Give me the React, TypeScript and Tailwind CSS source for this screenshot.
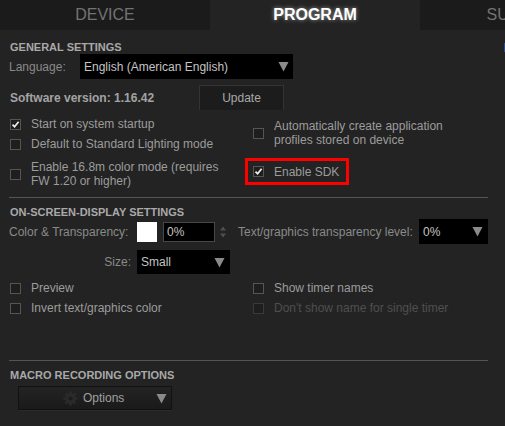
import React from "react";

const Tri = ({ className = "" }: { className?: string }) => (
  <svg width="11" height="11" viewBox="0 0 11 11" className={`shrink-0 ${className}`}>
    <polygon points="0.5,1 10.5,1 5.5,10.5" fill="#8a8a8a" />
  </svg>
);

const Check = ({ checked = false, disabled = false }: { checked?: boolean; disabled?: boolean }) => (
  <div
    className={`w-[11px] h-[11px] shrink-0 border ${disabled ? "border-[#3a3a3a]" : "border-[#555]"} bg-[#1e1e1e] flex items-center justify-center`}
  >
    {checked && (
      <svg width="9" height="9" viewBox="0 0 9 9">
        <path d="M1.5 4.6 L3.6 6.8 L7.6 1.8" stroke="#f0f0f0" strokeWidth="1.7" fill="none" />
      </svg>
    )}
  </div>
);

const Gear = () => (
  <svg width="15" height="15" viewBox="0 0 16 16" className="shrink-0">
    <g fill="#2a2a2a">
      <rect x="6.5" y="0.5" width="3" height="15" />
      <rect x="0.5" y="6.5" width="15" height="3" />
      <rect x="6.5" y="0.5" width="3" height="15" transform="rotate(45 8 8)" />
      <rect x="6.5" y="0.5" width="3" height="15" transform="rotate(-45 8 8)" />
      <circle cx="8" cy="8" r="5.5" />
    </g>
    <circle cx="8" cy="8" r="2.2" fill="#1c1c1c" />
  </svg>
);

export default function App() {
  const font = "font-['Liberation_Sans',Arial,sans-serif]";
  return (
    <div className={`w-[505px] h-[426px] overflow-hidden bg-[#232323] ${font} text-[12px] text-[#9c9c9c] relative`}>
      {/* Tabs */}
      <div className="flex h-[30px] w-[630px]">
        <div className="w-[210px] bg-[#1b1b1b] flex items-center justify-center text-[16px] text-[#737373]">DEVICE</div>
        <div className="w-[210px] bg-[#232323] flex items-center justify-center text-[16px] font-bold text-white [text-shadow:0_0_4px_rgba(255,255,255,0.55)]">
          PROGRAM
        </div>
        <div className="w-[210px] bg-[#1b1b1b] flex items-center justify-center text-[16px] text-[#737373]">SUPPORT</div>
      </div>
      <div className="absolute right-0 top-[43px] w-[1px] h-[9px] bg-[#2c4a8a]" />

      <div className="pl-[9px] pr-[17px]">
        {/* General */}
        <div className="mt-[10px] h-[14px] leading-[14px] pl-[1px] text-[11px] font-bold text-[#a9a9a9]">GENERAL SETTINGS</div>
        <div className="flex items-center h-[25px]">
          <div className="w-[71px] text-[#8a8a8a]">Language:</div>
          <div className="w-[213px] h-[25px] bg-black flex items-center justify-between pl-[4px] pr-[4px] text-[#c4c4c4]">
            <span>English (American English)</span>
            <Tri />
          </div>
        </div>
        <div className="flex items-center h-[25px] mt-[6px]">
          <div className="w-[190px] pl-[1px] font-bold text-[#a3a3a3]">Software version: 1.16.42</div>
          <div className="w-[85px] h-[25px] bg-[#1c1c1c] border border-[#333] border-b-0 flex items-center justify-center text-[#a8a8a8]">
            Update
          </div>
        </div>

        {/* Checkboxes */}
        <div className="flex mt-[7px]">
          <div className="w-[236px] pl-[1px]">
            <div className="flex items-center gap-[10px] h-[14px] leading-[14px]">
              <Check checked />
              <span>Start on system startup</span>
            </div>
            <div className="flex items-center gap-[10px] h-[14px] leading-[14px] mt-[6px]">
              <Check />
              <span>Default to Standard Lighting mode</span>
            </div>
            <div className="flex items-center gap-[10px] leading-[14px] mt-[9px]">
              <Check />
              <span>
                Enable 16.8m color mode (requires
                <br />
                FW 1.20 or higher)
              </span>
            </div>
          </div>
          <div>
            <div className="flex items-center gap-[10px] leading-[14px] mt-[2px] pl-[8px]">
              <Check />
              <span>
                Automatically create application
                <br />
                profiles stored on device
              </span>
            </div>
            <div className="mt-[11px] w-[104px] h-[27px] border-[3px] border-[#ff0000] flex items-center gap-[10px] pl-[5px]">
              <Check checked />
              <span>Enable SDK</span>
            </div>
          </div>
        </div>

        <div className="mt-[9px] h-[1px] bg-[#555]" />

        {/* OSD */}
        <div className="mt-[7px] h-[14px] leading-[14px] pl-[1px] text-[11px] font-bold text-[#a9a9a9]">ON-SCREEN-DISPLAY SETTINGS</div>
        <div className="flex items-center h-[25px] whitespace-nowrap">
          <div className="w-[128px] shrink-0 text-[#8a8a8a]">Color &amp; Transparency:</div>
          <div className="w-[20px] h-[20px] shrink-0 bg-white" />
          <div className="ml-[6px] w-[52px] h-[20px] shrink-0 bg-black border border-[#474747] flex items-center pl-[3px] text-[#c4c4c4]">0%</div>
          <svg width="8" height="14" viewBox="0 0 8 14" className="ml-[4px] shrink-0">
            <polygon points="1,5.5 7,5.5 4,1.5" fill="#505050" />
            <polygon points="1,8.5 7,8.5 4,12.5" fill="#505050" />
          </svg>
          <div className="ml-[11px] w-[174px] shrink-0 text-[#8a8a8a]">Text/graphics transparency level:</div>
          <div className="ml-[7px] w-[69px] h-[25px] shrink-0 bg-black flex items-center justify-between pl-[4px] pr-[5px] text-[#c4c4c4]">
            <span>0%</span>
            <Tri />
          </div>
        </div>
        <div className="flex items-center h-[24px] mt-[6px]">
          <div className="w-[122px] text-right text-[#8a8a8a]">Size:</div>
          <div className="ml-[6px] w-[93px] h-[24px] bg-black flex items-center justify-between pl-[4px] pr-[5px] text-[#c4c4c4]">
            <span>Small</span>
            <Tri />
          </div>
        </div>
        <div className="flex mt-[7px] pl-[1px]">
          <div className="w-[243px]">
            <div className="flex items-center gap-[10px] h-[14px] leading-[14px]">
              <Check />
              <span>Preview</span>
            </div>
            <div className="flex items-center gap-[10px] h-[14px] leading-[14px] mt-[6px]">
              <Check />
              <span>Invert text/graphics color</span>
            </div>
          </div>
          <div>
            <div className="flex items-center gap-[10px] h-[14px] leading-[14px]">
              <Check />
              <span>Show timer names</span>
            </div>
            <div className="flex items-center gap-[10px] h-[14px] leading-[14px] mt-[6px] text-[#4f4f4f]">
              <Check disabled />
              <span>Don't show name for single timer</span>
            </div>
          </div>
        </div>

        <div className="mt-[45px] h-[1px] bg-[#555]" />

        {/* Macro */}
        <div className="mt-[7px] h-[14px] leading-[14px] pl-[1px] text-[11px] font-bold text-[#a9a9a9]">MACRO RECORDING OPTIONS</div>
        <div className="ml-[9px] mt-[4px] w-[154px] h-[24px] bg-gradient-to-b from-[#232323] to-[#1a1a1a] border border-[#111] shadow-[0_1px_0_#2a2a2a] flex items-center pl-[44px] pr-[4px]">
          <Gear />
          <span className="ml-[5px] text-[#a0a0a0]">Options</span>
          <span className="flex-1" />
          <Tri />
        </div>
      </div>
    </div>
  );
}
